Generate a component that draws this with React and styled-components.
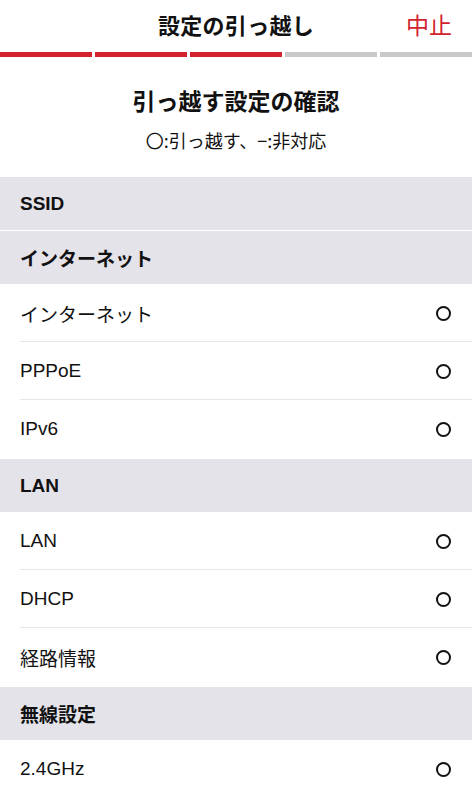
import React from "react";
import styled, { createGlobalStyle } from "styled-components";

const Global = createGlobalStyle`
  html, body { margin: 0; padding: 0; background: #fff; }
  body {
    font-family: "Liberation Sans", "Noto Sans CJK JP", sans-serif;
    color: #111;
    -webkit-font-smoothing: antialiased;
  }
  * { box-sizing: border-box; }
`;

const Page = styled.div`
  width: 472px;
  height: 799px;
  overflow: hidden;
  background: #fff;
`;

const TopBar = styled.header`
  display: grid;
  grid-template-columns: 1fr auto 1fr;
  align-items: center;
  height: 52px;
  padding: 0 20px 5px;
`;

const Title = styled.h1`
  grid-column: 2;
  margin: 0;
  font-size: 22px;
  line-height: 30px;
  font-weight: 600;
  letter-spacing: 0.3px;
  font-family: "Noto Sans CJK JP", sans-serif;
`;

const Cancel = styled.button`
  grid-column: 3;
  justify-self: end;
  border: 0;
  background: none;
  padding: 0;
  color: #d2232e;
  font-size: 23px;
  line-height: 30px;
  font-family: "Noto Sans CJK JP", sans-serif;
`;

const Progress = styled.div`
  display: flex;
  gap: 3px;
  height: 5px;
`;

const Step = styled.div`
  flex: 1;
  background: ${(p) => (p.$done ? "#d2232e" : "#c9c9c9")};
`;

const Intro = styled.div`
  display: flex;
  flex-direction: column;
  align-items: center;
  padding: 27px 0 25px;
  gap: 12px;
`;

const IntroTitle = styled.h2`
  margin: 0;
  font-size: 23px;
  line-height: 32px;
  font-weight: 700;
  font-family: "Noto Sans CJK JP", sans-serif;
`;

const IntroNote = styled.p`
  margin: 0;
  font-size: 18px;
  line-height: 24px;
  font-family: "Noto Sans CJK JP", sans-serif;
`;

const List = styled.div`
  display: flex;
  flex-direction: column;
  gap: 1px;
`;

const SectionHeader = styled.div`
  display: flex;
  align-items: center;
  height: 53px;
  padding: 0 20px;
  background: #e4e3e9;
  font-size: 19px;
  font-weight: 700;
`;

const Row = styled.div`
  display: flex;
  align-items: center;
  justify-content: space-between;
  height: 58px;
  padding: 0 20px;
  font-size: 19px;
  position: relative;
  &:not(:last-child)::after {
    content: "";
    position: absolute;
    left: 20px;
    right: 0;
    bottom: 0;
    height: 1px;
    background: #e7e7ea;
  }
`;

const Mark = styled.span`
  width: 15px;
  height: 15px;
  border: 2px solid #111;
  border-radius: 50%;
  margin-right: 1px;
`;

const sections = [
  { title: "SSID", rows: [] },
  { title: "インターネット", rows: ["インターネット", "PPPoE", "IPv6"] },
  { title: "LAN", rows: ["LAN", "DHCP", "経路情報"] },
  { title: "無線設定", rows: ["2.4GHz"] },
];

export default function App() {
  return (
    <Page>
      <Global />
      <TopBar>
        <Title>設定の引っ越し</Title>
        <Cancel>中止</Cancel>
      </TopBar>
      <Progress>
        {[true, true, true, false, false].map((d, i) => (
          <Step key={i} $done={d} />
        ))}
      </Progress>
      <Intro>
        <IntroTitle>引っ越す設定の確認</IntroTitle>
        <IntroNote>〇:引っ越す、−:非対応</IntroNote>
      </Intro>
      <List>
        {sections.map((s) => (
          <section key={s.title}>
            <SectionHeader>{s.title}</SectionHeader>
            {s.rows.map((r) => (
              <Row key={r}>
                <span>{r}</span>
                <Mark />
              </Row>
            ))}
          </section>
        ))}
      </List>
    </Page>
  );
}
